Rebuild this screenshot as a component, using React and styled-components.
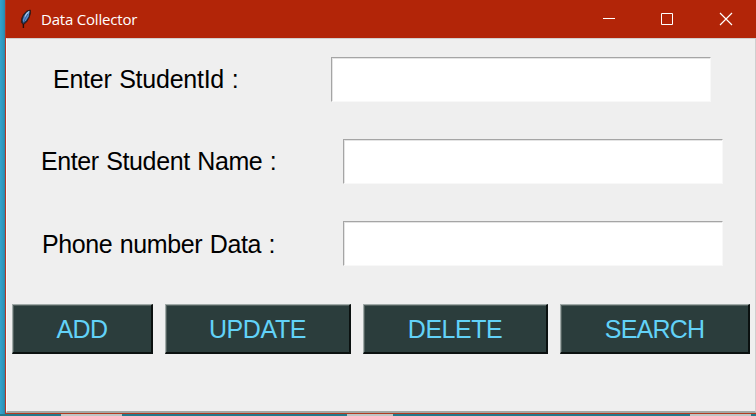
import React from "react";
import styled, { createGlobalStyle } from "styled-components";

const GlobalStyle = createGlobalStyle`
  * { box-sizing: border-box; }
  body { margin: 0; overflow: hidden; }
`;

const Desktop = styled.div`
  display: flex;
  flex-direction: column;
  width: 756px;
  height: 416px;
  padding-left: 5px;
  background: linear-gradient(90deg, #35a2cc 0, #2f97bd 3px, #2b86a8 5px);
`;

const Window = styled.main`
  display: flex;
  flex-direction: column;
  width: 751px;
  height: 414px;
  border-left: 1px solid #b2382a;
  border-bottom: 1px solid #b13a20;
  background: #efefef;
`;

const TitleBar = styled.header`
  display: flex;
  align-items: center;
  flex: none;
  height: 38px;
  padding: 0 1px 0 13px;
  background: #b22508;
  color: #fff;
`;

const Title = styled.h1`
  flex: 1;
  margin: -1px 0 0 9px;
  font: 400 15px/20px "Open Sans", sans-serif;
  letter-spacing: -0.2px;
`;

const WindowControl = styled.button`
  display: grid;
  place-items: center;
  width: 58.5px;
  height: 38px;
  padding: 0;
  border: 0;
  background: transparent;
  color: #fff;
`;

const Client = styled.form`
  flex: 1;
  padding: 18px 0 0 6px;
  border-top: 1px solid #d2cfce;
  border-left: 1px solid #fafafa;
  border-right: 1px solid #cfcfcf;
  border-bottom: 2px solid #a3a8a4;
`;

const FieldRow = styled.div`
  display: flex;
  height: 45px;
  margin-bottom: ${(p) => p.$gap}px;
  padding-left: ${(p) => p.$indent}px;
`;

const Label = styled.label`
  width: ${(p) => p.$width}px;
  color: #000;
  font: 400 25px/${(p) => p.$line}px "Liberation Sans", Arial, sans-serif;
  letter-spacing: ${(p) => p.$spacing}px;
  word-spacing: 1px;
  white-space: nowrap;
`;

const Entry = styled.input`
  width: 380px;
  height: 45px;
  padding: 0 4px;
  border: 1px solid;
  border-color: #a5a5a5 #f8f8f8 #f8f8f8 #a5a5a5;
  border-radius: 0;
  outline: 0;
  background: #fff;
  box-shadow: inset 1px 1px #e4e4e4;
  font: 400 25px "Liberation Sans", Arial, sans-serif;
`;

const Actions = styled.div`
  display: flex;
  gap: 12px;
  margin-left: -1px;
`;

const ActionButton = styled.button`
  width: ${(p) => p.$width}px;
  height: 50px;
  padding: 0;
  border: solid;
  border-width: 1px 2px 2px 1px;
  border-color: #a0aaa8 #0b1110 #0b1110 #a0aaa8;
  background: #2b3d3c;
  box-shadow: inset 1px 1px #53615f;
  color: #62d2f8;
  font: 400 25px/46px "Liberation Sans", Arial, sans-serif;
  letter-spacing: ${(p) => p.$spacing}px;
`;

const Taskbar = styled.footer`
  display: flex;
  height: 2px;
  margin-left: -5px;
  background: #24788a;
`;

const TaskbarItem = styled.span`
  width: ${(p) => p.$width}px;
  height: 2px;
  margin-left: ${(p) => p.$before}px;
  background: #bfc5c4;
`;

const FeatherIcon = () => (
  <svg width="13" height="20" viewBox="0 0 13 20">
    <path d="M11.4 1 7.8 2 4.6 5.2 2.6 9.5 2.3 13.6 4.4 15.6 7.6 13 10.2 8.6 11.6 4Z" fill="#1d2b40" stroke="#33150f" strokeWidth="0.8" />
    <path d="M10.6 2 7.6 3.6 5 7.2 3.7 11 4.2 13.6 7 11.8 9.6 7.4Z" fill="#5b8fd0" />
    <path d="M10 2.4 7.6 4.8 6.2 7.4" fill="none" stroke="#a9c9e4" strokeWidth="1.3" />
    <path d="M8.8 5 6 10 4.3 15" fill="none" stroke="#34558a" strokeWidth="0.8" />
    <path d="M4.4 14.5v4.5" stroke="#2a0c06" strokeWidth="1.4" />
  </svg>
);

const controls = [
  ["Minimize", <path key="p" d="M1 6.5h12" />],
  ["Maximize", <path key="p" d="M1.5 1.5h11v11h-11z" />],
  ["Close", <path key="p" d="m1 1 12 12M13 1 1 13" strokeWidth="1.2" />],
];

const fields = [
  { text: "Enter StudentId :", indent: 40, width: 278, gap: 37, line: 44, spacing: -0.25 },
  { text: "Enter Student Name :", indent: 28, width: 302, gap: 37, line: 44, spacing: -0.4 },
  { text: "Phone number Data :", indent: 29, width: 301, gap: 38, line: 46, spacing: -0.4 },
];

const actions = [
  { text: "ADD", width: 141, spacing: -0.6 },
  { text: "UPDATE", width: 186, spacing: -0.4 },
  { text: "DELETE", width: 185, spacing: -0.5 },
  { text: "SEARCH", width: 190, spacing: -0.8 },
];

const taskbarItems = [[61, 61], [225, 46], [297, 61]];

export default function App() {
  return (
    <>
      <GlobalStyle />
      <Desktop>
        <Window>
          <TitleBar>
            <FeatherIcon />
            <Title>Data Collector</Title>
            {controls.map(([name, shape]) => (
              <WindowControl key={name} aria-label={name}>
                <svg width="14" height="14" viewBox="0 0 14 14" fill="none" stroke="currentColor">
                  {shape}
                </svg>
              </WindowControl>
            ))}
          </TitleBar>
          <Client>
            {fields.map((f, i) => (
              <FieldRow key={f.text} $indent={f.indent} $gap={f.gap}>
                <Label htmlFor={`field-${i}`} $width={f.width} $line={f.line} $spacing={f.spacing}>{f.text}</Label>
                <Entry id={`field-${i}`} />
              </FieldRow>
            ))}
            <Actions>
              {actions.map((a) => (
                <ActionButton type="button" key={a.text} $width={a.width} $spacing={a.spacing}>{a.text}</ActionButton>
              ))}
            </Actions>
          </Client>
        </Window>
        <Taskbar>
          {taskbarItems.map(([before, width]) => (
            <TaskbarItem key={before} $before={before} $width={width} />
          ))}
        </Taskbar>
      </Desktop>
    </>
  );
}
